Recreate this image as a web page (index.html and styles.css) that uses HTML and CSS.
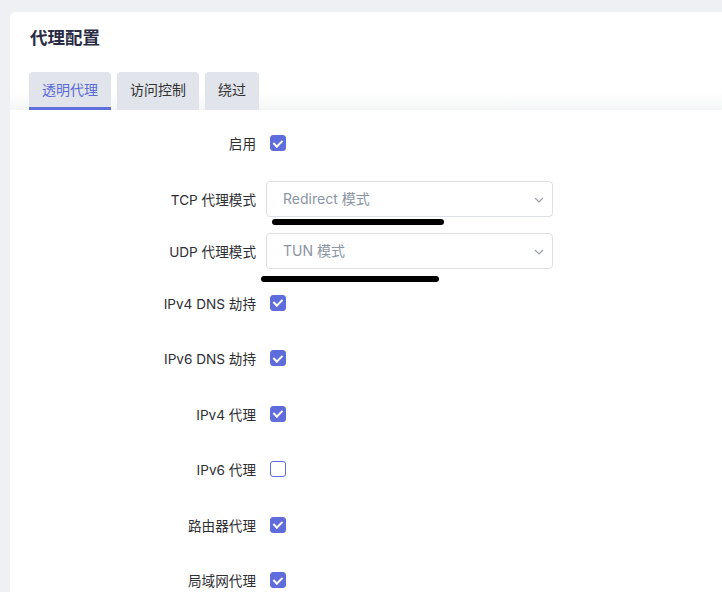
FILE: index.html
```html
<!DOCTYPE html>
<html lang="zh-CN">
<head>
    <meta charset="UTF-8">
    <meta name="viewport" content="width=device-width, initial-scale=1.0">
    <title>代理配置</title>
    <link rel="stylesheet" href="styles.css">
</head>
<body>
    <div class="card">
        <h2>代理配置</h2>
        <ul class="tabs">
            <li class="tab active">透明代理</li>
            <li class="tab">访问控制</li>
            <li class="tab">绕过</li>
        </ul>
        <div class="panel">
            <div class="row check">
                <label>启用</label>
                <span class="box checked"></span>
            </div>
            <div class="row">
                <label>TCP 代理模式</label>
                <div class="select">
                    Redirect 模式
                    <svg class="chev" width="10" height="6" viewBox="0 0 10 6"><path d="M1 1l4 4 4-4" fill="none" stroke="#9aa0a8" stroke-width="1.2"/></svg>
                    <span class="scribble one"></span>
                </div>
            </div>
            <div class="row">
                <label>UDP 代理模式</label>
                <div class="select">
                    TUN 模式
                    <svg class="chev" width="10" height="6" viewBox="0 0 10 6"><path d="M1 1l4 4 4-4" fill="none" stroke="#9aa0a8" stroke-width="1.2"/></svg>
                    <span class="scribble two"></span>
                </div>
            </div>
            <div class="row check">
                <label>IPv4 DNS 劫持</label>
                <span class="box checked"></span>
            </div>
            <div class="row check">
                <label>IPv6 DNS 劫持</label>
                <span class="box checked"></span>
            </div>
            <div class="row check">
                <label>IPv4 代理</label>
                <span class="box checked"></span>
            </div>
            <div class="row check">
                <label>IPv6 代理</label>
                <span class="box"></span>
            </div>
            <div class="row check">
                <label>路由器代理</label>
                <span class="box checked"></span>
            </div>
            <div class="row check">
                <label>局域网代理</label>
                <span class="box checked"></span>
            </div>
        </div>
    </div>
</body>
</html>
```

FILE: styles.css
```css
html, body {
    margin: 0;
    overflow: hidden;
}

body {
    background-color: #eef0f3;
    padding: 12px 0 0 10px;
    font-family: "Inter", "Noto Sans CJK SC", sans-serif;
    color: #333;
}

.card {
    background-color: #fff;
    border-radius: 6px 0 0 0;
    margin-right: -20px;
    min-height: 700px;
}

h2 {
    margin: 0;
    padding: 14px 20px 0 20px;
    font-size: 17.5px;
    line-height: 24px;
    font-weight: 700;
    color: #2a2c45;
}

.tabs {
    display: flex;
    gap: 6px;
    list-style: none;
    margin: 22px 0 0 0;
    padding: 0 19px;
    background: linear-gradient(to bottom, #fff 55%, #f4f5f6 100%);
}

.tab {
    height: 38px;
    line-height: 36px;
    padding: 0 13px;
    font-size: 14px;
    background-color: #e1e5eb;
    border-radius: 4px 4px 0 0;
    box-sizing: border-box;
}

.tab.active {
    color: #5b6ad9;
    border-bottom: 3px solid #5f6fdc;
}

.panel {
    padding-top: 7px;
}

.row {
    display: grid;
    grid-template-columns: 246px auto;
    column-gap: 10px;
    align-items: center;
    padding: 8px 0;
    min-height: 36px;
}

.row.check {
    padding-bottom: 11.5px;
}

.row label {
    text-align: right;
    font-size: 13.6px;
    color: #2e2e33;
}

.box {
    width: 16px;
    height: 16px;
    margin-left: 4px;
    border: 1.5px solid #5f6cdc;
    border-radius: 3px;
    box-sizing: border-box;
    position: relative;
}

.box.checked {
    background-color: #5f6cdc;
}

.box.checked::after {
    content: "";
    position: absolute;
    left: 4px;
    top: 1.5px;
    width: 3.5px;
    height: 7px;
    border: solid #fff;
    border-width: 0 2.2px 2.2px 0;
    transform: rotate(45deg);
}

.select {
    position: relative;
    width: 287px;
    height: 36px;
    box-sizing: border-box;
    border: 1px solid #dcdfe3;
    border-radius: 4px;
    padding-left: 16px;
    line-height: 34px;
    font-size: 14px;
    color: #8b95a5;
}

.chev {
    position: absolute;
    right: 8px;
    top: 15px;
}

/* redaction marks drawn over the screenshot */
.scribble {
    position: absolute;
    height: 6px;
    background: #000;
    border-radius: 3px;
}

.scribble.one {
    left: 5px;
    top: 37px;
    width: 172px;
}

.scribble.two {
    left: -6px;
    top: 42px;
    width: 178px;
}
```
